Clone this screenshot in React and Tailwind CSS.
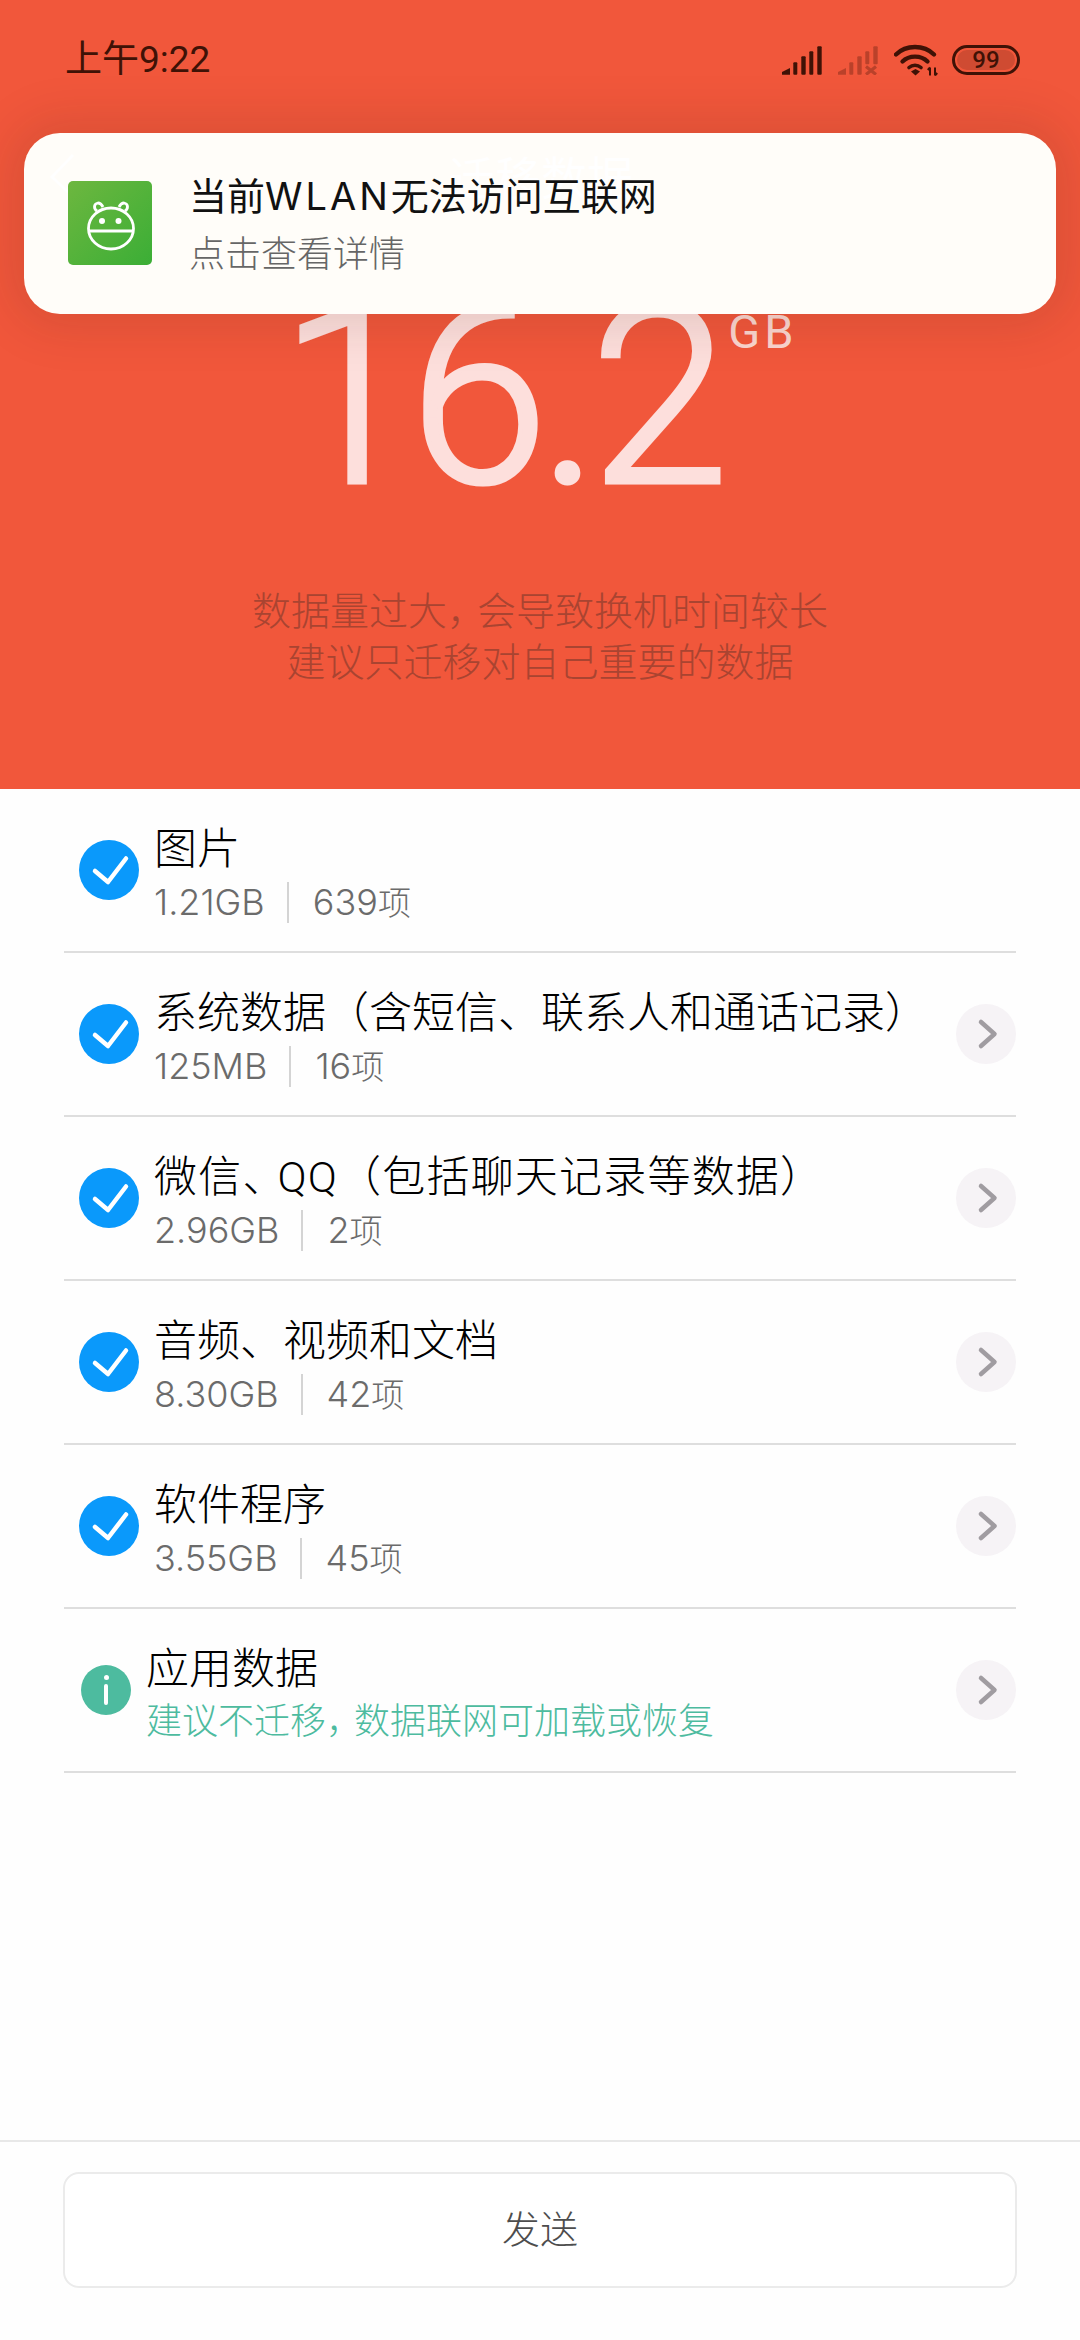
import React from "react";

const rows = [
  { id: "photo", title: "图片", size: "1.21GB", count: "639" },
  { id: "system", title: "系统数据（含短信、联系人和通话记录）", size: "125MB", count: "16", more: true },
  {
    id: "wechat",
    title: (
      <span className="tracking-[1.2px]">
        微信<span className="tracking-[-8px]">、</span>QQ（包括聊天记录等数据）
      </span>
    ),
    size: "2.96GB",
    count: "2",
    more: true,
  },
  { id: "media", title: "音频、视频和文档", size: "8.30GB", count: "42", more: true },
  { id: "apps", title: "软件程序", size: "3.55GB", count: "45", more: true },
];

const Bars = () => (
  <>
    <path d="M0 29.7V27L8 23v6.7z" />
    <rect x="11.3" y="17.3" width="4" height="12.4" rx="1" />
    <rect x="19.3" y="11.3" width="4.4" height="18.4" rx="1" />
  </>
);

const Signal = () => (
  <svg width="40" height="30" viewBox="0 0 40 30" fill="#3f1206">
    <Bars />
    <rect x="27.3" y="6.3" width="4" height="23.4" rx="1" />
    <rect x="35.3" y="1.3" width="4.4" height="28.4" rx="1" />
  </svg>
);

const SignalOff = () => (
  <svg width="40" height="30" viewBox="0 0 40 30" fill="#3f1206" opacity="0.3">
    <Bars />
    <rect x="27.3" y="6.3" width="4" height="13" rx="1" />
    <rect x="35.3" y="1.3" width="4.4" height="18" rx="1" />
    <path d="M28 21.5l10 8M38 21.5l-10 8" stroke="#3f1206" strokeWidth="3.2" fill="none" />
  </svg>
);

const Wifi = () => (
  <svg className="-mr-[2px]" width="44" height="32" viewBox="0 0 44 32" fill="none" stroke="#3f1206" strokeLinecap="round">
    <path d="M2 10.5C12 .5 30 .5 40 10.5" strokeWidth="4.3" />
    <path d="M8.5 17.5C15 11 27 11 33.5 17.5" strokeWidth="4.3" />
    <path d="M15 23.5C18.5 20.5 23.5 20.5 27 23.5" strokeWidth="3.6" />
    <path d="M17 27.5l4.5-2.5 4.5 2.5-4.5 4z" fill="#3f1206" stroke="none" />
    <path d="M36 23.5v8M33.8 26l2.2-2.5M41 23.5v8M43.2 29l-2.2 2.5" strokeWidth="2" strokeLinecap="butt" />
  </svg>
);

const Check = () => (
  <svg width="60" height="60" viewBox="0 0 60 60" className="shrink-0">
    <circle cx="30" cy="30" r="30" fill="#0a99fb" />
    <path d="M16 31l13 11 18-23.5" fill="none" stroke="#fff" strokeWidth="4.5" strokeLinecap="round" strokeLinejoin="round" />
  </svg>
);

const More = () => (
  <div className="w-[60px] h-[60px] rounded-full bg-[#f6f3f6] flex items-center justify-center shrink-0">
    <svg width="60" height="60" viewBox="0 0 60 60" fill="none">
      <path d="M25 18l13.5 12L25 42" stroke="#a09ca1" strokeWidth="4.5" strokeLinecap="round" strokeLinejoin="round" />
    </svg>
  </div>
);

const Row = ({ row }) => (
  <div className="h-[164px] border-b-2 border-[#dedede] flex items-center pl-[15px]">
    <Check />
    <div className="ml-[15px] pt-[8px] flex-1 min-w-0">
      <div className="text-[43px] leading-[50px] text-black font-light whitespace-nowrap">{row.title}</div>
      <div className="mt-[6px] flex items-center text-[36px] leading-[44px] text-[#6b6b6b] font-light font-['Inter','Noto_Sans_CJK_SC',sans-serif]">
        <span>{row.size}</span>
        <span className="w-[2px] h-[41px] bg-[#d4d4d4] ml-[22px] mr-[24px]" />
        <span>
          {row.count}
          <span className="text-[33px]">项</span>
        </span>
      </div>
    </div>
    {row.more && <More />}
  </div>
);

export default function App() {
  return (
    <div className="w-[1080px] h-[2340px] bg-[#fefefe] flex flex-col overflow-hidden font-['Roboto','Noto_Sans_CJK_SC',sans-serif]">
      <div className="relative h-[789px] bg-[#f1573b] shrink-0">
        {/* status bar */}
        <div className="flex items-center justify-between pl-[65px] pr-[60px] pt-[43px] h-[76px] text-[#3f1206]">
          <span className="text-[37px] leading-[40px]">上午9:22</span>
          <div className="flex items-center gap-[16px]">
            <Signal />
            <SignalOff />
            <Wifi />
            <div className="w-[68px] h-[30px] rounded-full border-[3px] border-[#3f1206] p-[2px]">
              <div className="h-full rounded-full bg-[#cf4b32] flex items-center justify-center text-[24px] leading-none font-medium">99</div>
            </div>
          </div>
        </div>

        {/* big number */}
        <div className="flex justify-center mt-[192px] h-[260px]">
          <span className="text-[248px] leading-[260px] font-light tracking-[-8px] text-[#fddfdc] [-webkit-text-stroke:5px_#fddfdc]">16.2</span>
          <span className="ml-[8px] mr-[2px] mt-[39px] text-[47px] leading-[50px] tracking-[4px] text-[#fbd6cf]">GB</span>
        </div>

        <div className="mt-[59px] text-center text-[39px] leading-[51px] font-light text-[#a94431]">
          <div>
            数据量过大<span className="tracking-[-9px]">，</span>会导致换机时间较长
          </div>
          <div>建议只迁移对自己重要的数据</div>
        </div>

        {/* notification */}
        <div className="absolute left-[24px] top-[133px] w-[1032px] h-[181px] rounded-[36px] bg-[#fffdf9] shadow-[0_0_50px_12px_rgba(60,30,20,0.13)] flex items-center pl-[44px]">
          <svg className="absolute left-[24px] top-[18px]" width="28" height="44" viewBox="0 0 28 44" fill="none">
            <path d="M25 4L4 26l16 15" stroke="#fff" strokeWidth="3" />
          </svg>
          <span className="absolute left-[425px] top-[20px] text-[46px] leading-[52px] text-white">迁移数据</span>
          <svg className="shrink-0 mb-[2px] relative" width="84" height="84" viewBox="0 0 84 84">
            <defs>
              <linearGradient id="robot" x1="0" y1="0" x2="1" y2="1">
                <stop offset="0" stopColor="#6db73f" />
                <stop offset="1" stopColor="#3bae36" />
              </linearGradient>
            </defs>
            <rect width="84" height="84" rx="5" fill="url(#robot)" />
            <g fill="none" stroke="#fff" strokeWidth="2.8">
              <ellipse cx="43" cy="47.5" rx="22.5" ry="20.5" />
              <path d="M21 50h44" />
              <path d="M29 30c-3-2-4-7 1-8 3 0 4 2 5 4M57 30c3-2 4-7-1-8-3 0-4 2-5 4" />
            </g>
            <circle cx="34" cy="40" r="3" fill="#fff" />
            <circle cx="50.5" cy="40" r="3" fill="#fff" />
          </svg>
          <div className="ml-[37px] mt-[3px] relative">
            <div className="text-[38px] leading-[44px] text-[#111]">
              当前<span className="tracking-[3px] font-['Inter']">WLAN</span>无法访问互联网
            </div>
            <div className="mt-[14px] text-[36px] leading-[44px] font-light text-[#666]">点击查看详情</div>
          </div>
        </div>
      </div>

      <div className="flex-1 px-[64px]">
        {rows.map((row) => (
          <Row key={row.id} row={row} />
        ))}
        <div className="h-[164px] border-b-2 border-[#dedede] flex items-center pl-[17px]">
          <div className="w-[50px] h-[50px] rounded-full bg-[#4dbb9f] flex flex-col items-center justify-center gap-[4px] shrink-0">
            <span className="w-[5px] h-[5px] rounded-full bg-white" />
            <span className="w-[4px] h-[21px] rounded-full bg-white" />
          </div>
          <div className="ml-[15px] pt-[8px] flex-1 min-w-0">
            <div className="text-[43px] leading-[50px] text-black font-light">应用数据</div>
            <div className="mt-[6px] text-[36px] leading-[44px] font-light text-[#4dbb9f]">
              建议不迁移<span className="tracking-[-8px]">，</span>数据联网可加载或恢复
            </div>
          </div>
          <More />
        </div>
      </div>

      <div className="h-[200px] border-t-2 border-[#e8e8e8] px-[63px] pt-[30px] shrink-0">
        <button className="w-full h-[116px] rounded-[16px] border-2 border-[#ebebeb] bg-white text-[38px] font-light text-[#4d4d4d]">发送</button>
      </div>
    </div>
  );
}
